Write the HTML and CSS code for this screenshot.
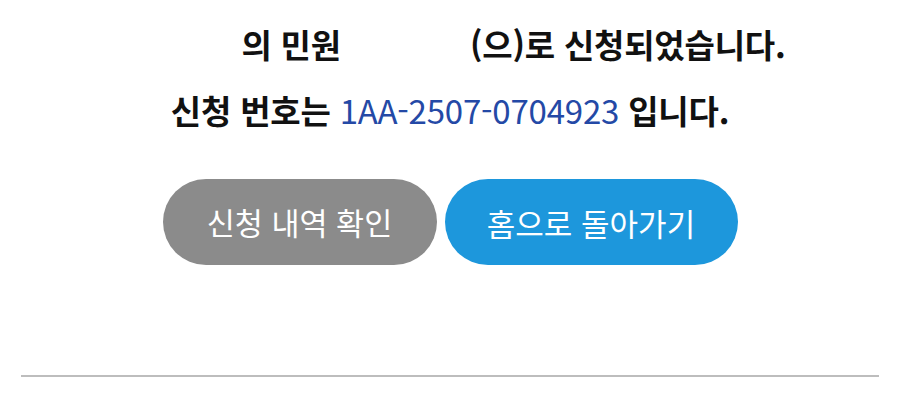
FILE: index.html
```html
<!DOCTYPE html>
<html lang="ko">
<head>
<meta charset="utf-8">
<title>신청 완료</title>
<link rel="stylesheet" href="styles.css">
</head>
<body>
<main class="done">
  <p class="msg"><span class="redact r1"></span>의 민원 <span class="redact r2"></span>(으)로 신청되었습니다.</p>
  <p class="msg num-line">신청 번호는 <span class="num">1AA-2507-0704923</span> 입니다.</p>
  <div class="actions">
    <button class="btn btn-gray" type="button">신청 내역 확인</button>
    <button class="btn btn-blue" type="button">홈으로 돌아가기</button>
  </div>
</main>
<hr class="divider">
</body>
</html>
```
FILE: styles.css
```css
html, body {
  margin: 0;
  padding: 0;
  background: #ffffff;
}
body {
  font-family: "Noto Sans CJK KR", "Noto Sans", sans-serif;
  color: #111111;
}
.done {
  display: flex;
  flex-direction: column;
  align-items: center;
  padding-top: 11px;
}
.msg {
  margin: 0;
  font-size: 33px;
  font-weight: 700;
  line-height: 66px;
  letter-spacing: -0.2px;
  white-space: nowrap;
}
.redact {
  display: inline-block;
  height: 1px;
}
.r1 { width: 127px; }
.r2 { width: 120px; }
.num {
  font-weight: 400;
  color: #2449a6;
}
.actions {
  display: flex;
  gap: 8px;
  margin-top: 36px;
}
.btn {
  border: 0;
  height: 86px;
  border-radius: 43px;
  color: #ffffff;
  font-family: "Noto Sans CJK KR", "Noto Sans", sans-serif;
  font-weight: 400;
  cursor: pointer;
}
.btn-gray {
  width: 274px;
  background: #8b8b8b;
  font-size: 30.5px;
}
.btn-blue {
  width: 293px;
  background: #1d97dc;
  font-size: 31px;
}
.divider {
  margin: 110px 21px 0;
  border: 0;
  height: 2px;
  background: #bdbdbd;
}
```
